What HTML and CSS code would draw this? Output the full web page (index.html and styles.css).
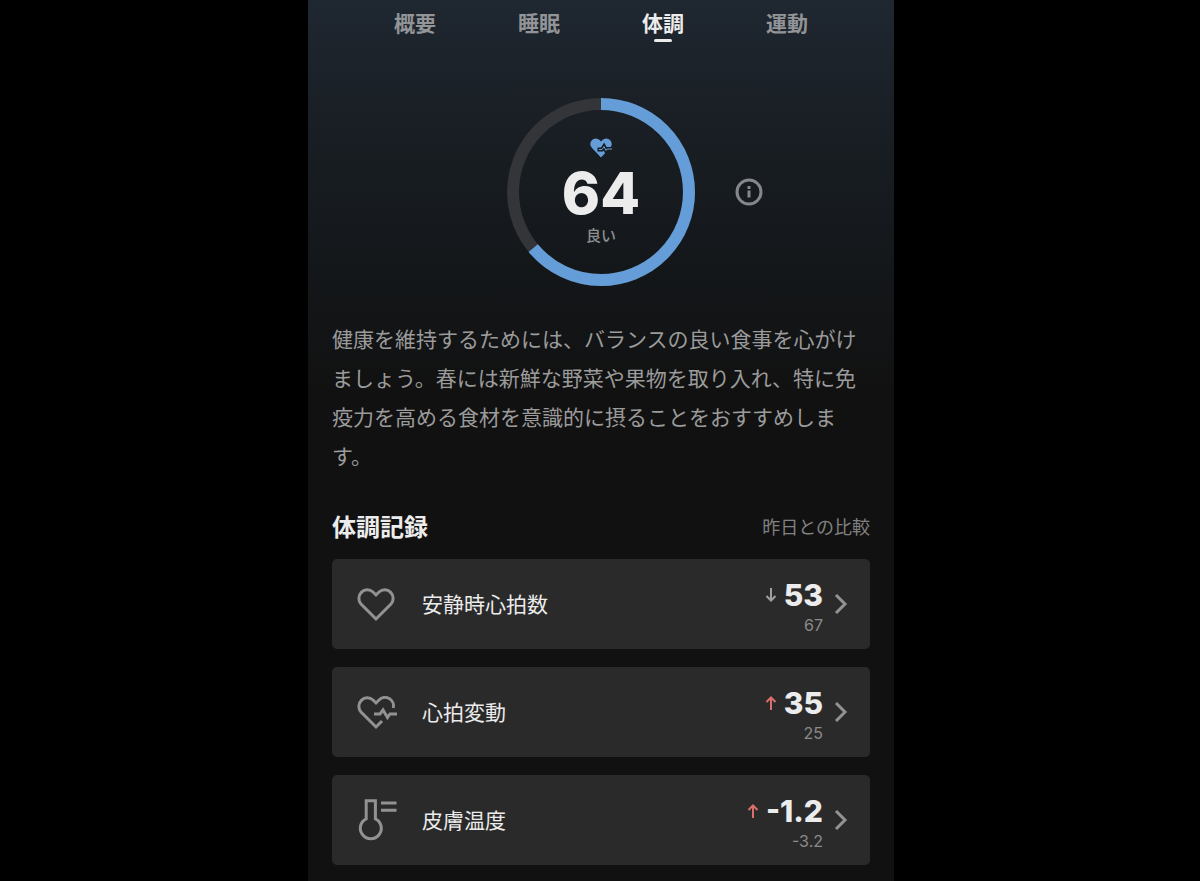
FILE: index.html
```html
<!DOCTYPE html>
<html lang="ja">
<head>
    <meta charset="UTF-8">
    <meta name="viewport" content="width=device-width, initial-scale=1.0">
    <title>体調</title>
    <link rel="stylesheet" href="styles.css">
</head>
<body>
    <div class="app">
        <nav class="tabs">
            <a href="#overview">概要</a>
            <a href="#sleep">睡眠</a>
            <a href="#condition" class="active" aria-current="page">体調</a>
            <a href="#exercise">運動</a>
        </nav>

        <main>
            <section class="score">
                <div class="ring">
                    <svg class="ring-chart" viewBox="0 0 188 188" aria-hidden="true">
                        <circle class="ring-track" cx="94" cy="94" r="88"/>
                        <circle class="ring-value" cx="94" cy="94" r="88" pathLength="100" stroke-dasharray="64 36" transform="rotate(-90 94 94)"/>
                    </svg>
                    <div class="ring-content">
                        <svg class="score-icon" viewBox="0 0 22 20" aria-hidden="true">
                            <path class="score-heart" d="M11 19.500 2 10A5.500 5.500 0 0 1 9.600 2L11 3.400 12.400 2A5.500 5.500 0 0 1 20 10Z"/>
                            <path class="score-pulse-edge" d="M7.500 11.500h4.500l2-3 2 4 1-1.500H22"/>
                            <path class="score-pulse" d="M9 11.500h3l2-3 2 4 1-1.500h5"/>
                        </svg>
                        <strong>64</strong>
                        <span>良い</span>
                    </div>
                </div>
                <button type="button" class="info" aria-label="情報">
                    <svg width="28" height="28" viewBox="0 0 28 28">
                        <circle cx="14" cy="14" r="12"/>
                        <path d="M14 12.500v7M14 8v3"/>
                    </svg>
                </button>
            </section>

            <p class="advice">健康を維持するためには、バランスの良い食事を心がけましょう。春には新鮮な野菜や果物を取り入れ、特に免疫力を高める食材を意識的に摂ることをおすすめします。</p>

            <section class="records">
                <header>
                    <h2>体調記録</h2>
                    <span>昨日との比較</span>
                </header>

                <a href="#resting-heart-rate" class="card">
                    <svg class="card-icon" viewBox="0 -5 42 44" aria-hidden="true">
                        <path d="M20 32 5 17A8.500 8.500 0 0 1 17 5l3 3 3-3a8.500 8.500 0 0 1 12 12Z"/>
                    </svg>
                    <span class="card-label">安静時心拍数</span>
                    <span class="card-data">
                        <span class="current">
                            <svg class="trend" viewBox="0 0 12 16" aria-hidden="true"><path d="M6 1v12M1.500 9 6 13.500 10.500 9"/></svg>
                            <strong>53</strong>
                        </span>
                        <span class="previous">67</span>
                    </span>
                    <svg class="chevron" viewBox="0 0 14 22" aria-hidden="true"><path d="M2 2l9 9-9 9"/></svg>
                </a>

                <a href="#heart-rate-variability" class="card">
                    <svg class="card-icon" viewBox="0 -5 42 44" aria-hidden="true">
                        <path d="M26 26l-6 6L5 17A8.500 8.500 0 0 1 17 5l3 3 3-3a8.500 8.500 0 0 1 14.300 8"/>
                        <path d="M18 19h6l3-4 4.500 7.500L34 19h7"/>
                    </svg>
                    <span class="card-label">心拍変動</span>
                    <span class="card-data">
                        <span class="current">
                            <svg class="trend up" viewBox="0 0 12 16" aria-hidden="true"><path d="M6 15V3M1.500 7 6 2.500 10.500 7"/></svg>
                            <strong>35</strong>
                        </span>
                        <span class="previous">25</span>
                    </span>
                    <svg class="chevron" viewBox="0 0 14 22" aria-hidden="true"><path d="M2 2l9 9-9 9"/></svg>
                </a>

                <a href="#skin-temperature" class="card">
                    <svg class="card-icon" viewBox="0 0 42 44" aria-hidden="true">
                        <path d="M10.200 20.800V2.800h9.200v18A10.500 10.500 0 1 1 10.200 20.800Z"/>
                        <path d="M25 5h15.500M25 12.300h15.500"/>
                    </svg>
                    <span class="card-label">皮膚温度</span>
                    <span class="card-data">
                        <span class="current">
                            <svg class="trend up" viewBox="0 0 12 16" aria-hidden="true"><path d="M6 15V3M1.500 7 6 2.500 10.500 7"/></svg>
                            <strong>-1.2</strong>
                        </span>
                        <span class="previous">-3.2</span>
                    </span>
                    <svg class="chevron" viewBox="0 0 14 22" aria-hidden="true"><path d="M2 2l9 9-9 9"/></svg>
                </a>
            </section>
        </main>
    </div>
</body>
</html>
```
FILE: styles.css
```css
* {
    box-sizing: border-box;
}
body {
    display: grid;
    grid-template-columns: 308fr 586fr 306fr;
    min-height: 100vh;
    margin: 0;
    background-color: #000;
    color: #ececec;
    font-family: "Noto Sans CJK JP", sans-serif;
}
a {
    color: inherit;
    text-decoration: none;
}
svg {
    display: block;
    fill: none;
}
.app {
    grid-column: 2;
    background: linear-gradient(#1f2731 0, #1a2026 100px, #15191d 230px, #111 390px) #111;
}
.tabs {
    display: flex;
    height: 46px;
    padding: 0 45px;
}
.tabs a {
    display: flex;
    flex: 1;
    flex-direction: column;
    align-items: center;
    padding-top: 7px;
    color: #929497;
    font-size: 21px;
    font-weight: 700;
    line-height: 30px;
}
.tabs .active {
    color: #ececec;
}
.tabs .active::after {
    content: "";
    width: 18px;
    height: 3px;
    margin-top: 2px;
    border-radius: 2px;
    background-color: #ececec;
}
main {
    padding: 52px 24px 17px;
}
.score {
    display: grid;
    grid-template-columns: 1fr auto 1fr;
    align-items: center;
    column-gap: 40px;
}
.ring {
    display: grid;
    grid-column: 2;
    width: 188px;
    height: 188px;
}
.ring-chart,
.ring-content {
    grid-area: 1 / 1;
}
.ring-chart circle {
    stroke-width: 12px;
}
.ring-chart .ring-track {
    stroke: #333538;
}
.ring-chart .ring-value {
    stroke: #649dd7;
}
.ring-content {
    display: flex;
    flex-direction: column;
    align-items: center;
    padding-top: 40px;
}
.score-icon {
    width: 22px;
    height: 20px;
}
.score-heart {
    fill: #649dd7;
}
.score-pulse-edge {
    stroke: #171c21;
    stroke-width: 4px;
}
.score-pulse {
    stroke: #649dd7;
    stroke-width: 1px;
}
.ring-content strong {
    margin-top: 4px;
    font-family: Inter, sans-serif;
    font-size: 58px;
    font-weight: 800;
    line-height: 62px;
}
.ring-content span {
    color: #8d8f91;
    font-size: 15px;
    font-weight: 500;
    line-height: 22px;
}
.info {
    justify-self: start;
    padding: 0;
    border: 0;
    background: none;
    cursor: pointer;
}
.info svg {
    stroke: #85878a;
    stroke-width: 3px;
}
.advice {
    margin: 33px 0 0;
    color: #9b9b9b;
    font-size: 21px;
    line-height: 39px;
}
.records {
    display: flex;
    flex-direction: column;
    gap: 18px;
    margin-top: 36px;
}
.records header {
    display: flex;
    justify-content: space-between;
    align-items: center;
    line-height: 30px;
}
.records h2 {
    margin: 0;
    font-size: 24px;
    font-weight: 700;
}
.records header span {
    color: #818181;
    font-size: 18px;
}
.card {
    display: flex;
    align-items: center;
    min-height: 90px;
    padding: 0 22px 0 24px;
    border-radius: 5px;
    background-color: #2a2a2a;
}
.card-icon {
    width: 42px;
    height: 44px;
    margin-right: 24px;
    stroke: #929292;
    stroke-width: 3px;
}
.card-label {
    flex: 1;
    padding-bottom: 3px;
    font-size: 21px;
}
.card-data {
    display: flex;
    flex-direction: column;
    align-items: flex-end;
    margin-right: 11px;
    padding-top: 6px;
    font-family: Inter, sans-serif;
}
.current {
    display: flex;
    align-items: center;
    gap: 7px;
}
.current strong {
    font-size: 30px;
    font-weight: 800;
    line-height: 36px;
}
.trend {
    width: 12px;
    height: 16px;
    stroke: #a0a0a0;
    stroke-width: 2px;
}
.trend.up {
    stroke: #d9706c;
}
.previous {
    color: #8a8a8a;
    font-size: 16px;
    line-height: 24px;
}
.chevron {
    width: 14px;
    height: 22px;
    stroke: #929292;
    stroke-width: 3px;
}
```
